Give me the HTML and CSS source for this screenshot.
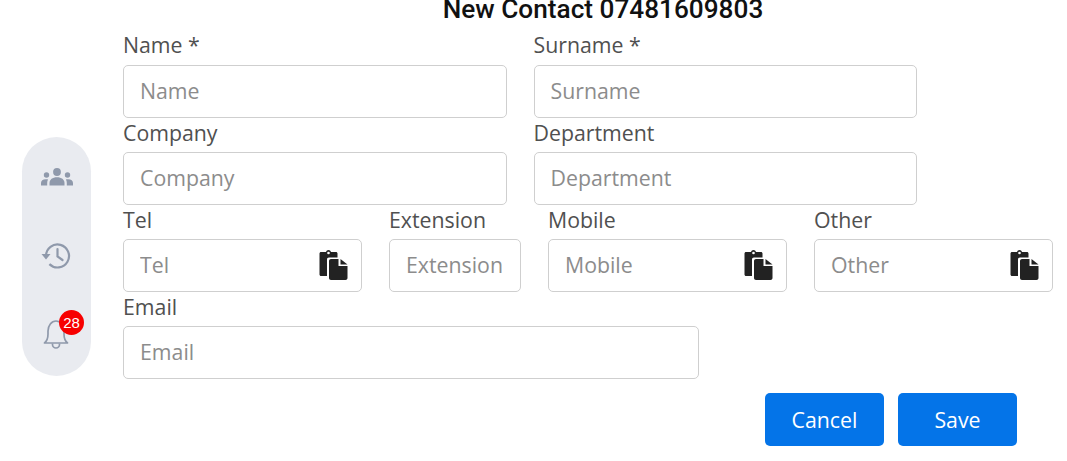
FILE: index.html
```html
<!DOCTYPE html>
<html>
<head>
  <meta charset="UTF-8"/>
  <title>New Contact</title>
  <link rel="stylesheet" href="styles.css">
</head>
<body>
  <div class="page">
    <div class="sidebar">
      <button class="side-btn" type="button">
        <svg width="34" height="22" viewBox="0 0 34 22" fill="#8f99ab">
          <circle cx="17" cy="6" r="3.9"/>
          <path d="M9.5 19.500V17c0-3.600 3-5.800 7.500-5.800s7.500 2.200 7.500 5.800v2.500z"/>
          <circle cx="6.500" cy="9" r="2.700"/>
          <path d="M1 19.500v-2.400c0-2.400 1.800-3.900 4.800-3.900.9 0 1.700.1 2.300.4-.6 1-.9 2.100-.9 3.300v2.600z"/>
          <circle cx="27.500" cy="9" r="2.700"/>
          <path d="M33 19.500v-2.400c0-2.400-1.800-3.900-4.800-3.900-.9 0-1.700.1-2.300.4.600 1 .9 2.100.9 3.300v2.600z"/>
        </svg>
      </button>
      <button class="side-btn" type="button">
        <svg width="32" height="30" viewBox="0.5 0 32 30" fill="none" stroke="#8f99ab" stroke-width="2.200">
          <path d="M5.500 15a11.500 11.500 0 1 1 3.370 8.130"/>
          <path d="M17 8v7.500l5 3.500" stroke-linecap="round"/>
          <path d="M1 13h9l-4.500 5.500z" fill="#8f99ab" stroke="none"/>
        </svg>
      </button>
      <button class="side-btn" type="button">
        <svg width="28" height="30" viewBox="1 0 28 30" fill="none" stroke="#8f99ab" stroke-width="1.700">
          <path d="M2.500 23c2.500-2 3.500-4.500 3.500-9v-3c0-5.500 3.500-10 8-10s8 4.500 8 10v3c0 4.500 1 7 3.500 9z" stroke-linejoin="round"/>
          <path d="M10.500 23.500v1a3.500 3.500 0 0 0 7 0v-1"/>
        </svg>
        <span class="badge">28</span>
      </button>
    </div>

    <div class="form">
      <h1 class="title">New Contact 07481609803</h1>

      <div class="row row-first">
        <div class="field w-half">
          <label>Name *</label>
          <input type="text" placeholder="Name">
        </div>
        <div class="field w-half">
          <label>Surname *</label>
          <input type="text" placeholder="Surname">
        </div>
      </div>

      <div class="row">
        <div class="field w-half">
          <label>Company</label>
          <input type="text" placeholder="Company">
        </div>
        <div class="field w-half">
          <label>Department</label>
          <input type="text" placeholder="Department">
        </div>
      </div>

      <div class="row">
        <div class="field w-phone">
          <label>Tel</label>
          <div class="input-wrap">
            <input type="text" placeholder="Tel">
            <svg class="paste" viewBox="0 0 30 30"><use href="#paste-icon"/></svg>
          </div>
        </div>
        <div class="field w-ext">
          <label>Extension</label>
          <input type="text" placeholder="Extension">
        </div>
        <div class="field w-phone">
          <label>Mobile</label>
          <div class="input-wrap">
            <input type="text" placeholder="Mobile">
            <svg class="paste" viewBox="0 0 30 30"><use href="#paste-icon"/></svg>
          </div>
        </div>
        <div class="field w-phone">
          <label>Other</label>
          <div class="input-wrap">
            <input type="text" placeholder="Other">
            <svg class="paste" viewBox="0 0 30 30"><use href="#paste-icon"/></svg>
          </div>
        </div>
      </div>

      <div class="row">
        <div class="field w-email">
          <label>Email</label>
          <input type="text" placeholder="Email">
        </div>
      </div>

      <div class="actions">
        <button class="mainbutton" type="button">Cancel</button>
        <button class="mainbutton" type="button">Save</button>
      </div>
    </div>
  </div>

  <svg width="0" height="0" class="defs">
    <symbol id="paste-icon" viewBox="0 0 30 30">
      <path fill="#222" d="M.5 3.500C.5 2.700 1.200 2 2 2h5c.3-1.200 1.400-2 2.500-2S11.700.8 12 2h5c.8 0 1.500.7 1.500 1.500v4H10c-1.400 0-2 .8-2 2V26H2c-.8 0-1.500-.7-1.500-1.500z"/>
      <circle cx="9.500" cy="3" r="1.300" fill="#fff"/>
      <path fill="#222" d="M10 11c0-1.100.9-2 2-2h7.500v7h9v12c0 1.100-.9 2-2 2H12c-1.100 0-2-.9-2-2z"/>
      <path fill="#222" d="M21.500 9l7 5.500h-7z"/>
    </symbol>
  </svg>
</body>
</html>
```

FILE: styles.css
```css
html, body {
  width: 100%;
  height: 100%;
  margin: 0;
  padding: 0;
  overflow: hidden;
  background-color: #fff;
}
body {
  font-family: "Open Sans", "Liberation Sans", sans-serif;
  color: #505050;
}
.defs {
  display: none;
}

.page {
  display: flex;
  align-items: flex-start;
  padding-left: 22px;
}

.sidebar {
  flex: 0 0 auto;
  display: flex;
  flex-flow: column nowrap;
  justify-content: space-between;
  align-items: center;
  box-sizing: border-box;
  width: 69px;
  height: 238.5px;
  margin-top: 137px;
  padding: 20px 0 21px;
  background-color: #e9ebf0;
  border-radius: 35px;
}
.side-btn {
  position: relative;
  display: flex;
  justify-content: center;
  align-items: center;
  width: 40px;
  height: 40px;
  padding: 0;
  border: 0;
  background: none;
}
.badge {
  position: absolute;
  top: -5px;
  left: 22.5px;
  width: 25px;
  height: 25px;
  border-radius: 50%;
  background-color: #f70000;
  color: #fff;
  font-size: 15px;
  line-height: 25px;
  text-align: center;
}

.form {
  flex: 0 0 auto;
  width: 930px;
  margin-left: 32px;
}
.title {
  width: 960px;
  height: 18px;
  margin: 0 0 13px;
  font-family: Roboto, "Liberation Sans", sans-serif;
  font-size: 26.2px;
  font-weight: 500;
  line-height: 18px;
  text-align: center;
  color: #111;
}

.row {
  display: flex;
  gap: 27px;
}
.field {
  flex: 0 0 auto;
}
.field label {
  display: block;
  height: 34px;
  font-size: 21.3px;
  line-height: 29px;
  color: #505050;
}
.row-first .field label {
  line-height: 27px;
}
.w-half { width: 383.5px; }
.w-phone { width: 239px; }
.w-ext { width: 132px; }
.w-email { width: 576px; }

.field input {
  display: block;
  box-sizing: border-box;
  width: 100%;
  height: 53px;
  padding: 0 16px 2px;
  border: 1px solid #cfcfcf;
  border-radius: 5px;
  background-color: #fff;
  font-family: inherit;
  font-size: 21.3px;
  color: #505050;
}
.field input::placeholder {
  color: #8c8c8c;
  opacity: 1;
}
.input-wrap {
  position: relative;
}
.paste {
  position: absolute;
  top: 10px;
  right: 13px;
  width: 30px;
  height: 32px;
}

.actions {
  display: flex;
  justify-content: flex-end;
  gap: 14px;
  width: 894px;
  margin-top: 14px;
}
.mainbutton {
  width: 119px;
  height: 53px;
  padding: 0;
  border: 0;
  border-radius: 5px;
  background-color: #0474e8;
  color: #fff;
  font-family: inherit;
  font-size: 21.3px;
}
```
